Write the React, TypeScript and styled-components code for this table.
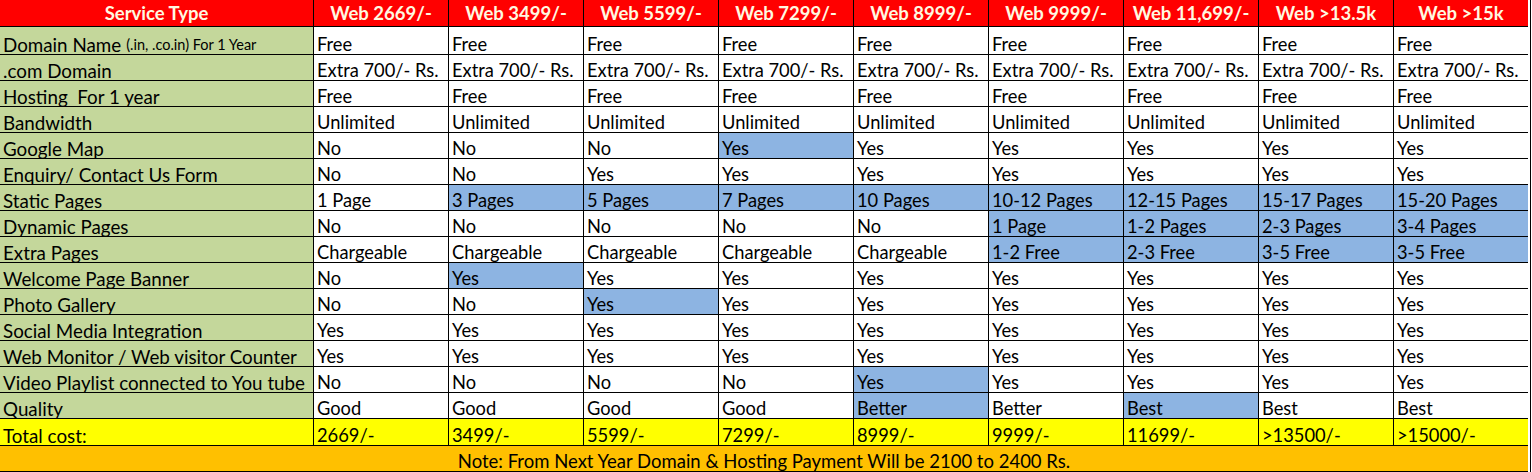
import React from "react";
import styled, { createGlobalStyle } from "styled-components";

const Global = createGlobalStyle`
  html, body { margin: 0; padding: 0; background: #fff; }
  body { font-family: Lato, "Open Sans", "Liberation Sans", sans-serif; }
`;

const Sheet = styled.div`
  display: grid;
  grid-template-columns: 313px repeat(9, 135px);
  grid-template-rows: 27px 28px repeat(14, 26px) 27px 26px;
  width: 1531px;
  border-right: 1px solid #000;
  box-sizing: border-box;
`;

const HeadCell = styled.div<{ $first?: boolean }>`
  background: #ff0000;
  color: #fff8e0;
  font-weight: 700;
  font-size: 18.5px;
  display: flex;
  align-items: center;
  justify-content: center;
  border-bottom: 1px solid #000;
  border-left: ${(p) => (p.$first ? "none" : "1px solid #000")};
  box-sizing: border-box;
  white-space: nowrap;
`;

type Tone = "green" | "white" | "blue" | "yellow";
const tones: Record<Tone, string> = {
  green: "#c4d79b",
  white: "#ffffff",
  blue: "#8db4e2",
  yellow: "#ffff00",
};

const Cell = styled.div<{ $tone: Tone; $first?: boolean }>`
  background: ${(p) => tones[p.$tone]};
  color: #000;
  font-size: ${(p) => (p.$first ? "18.8px" : "18.3px")};
  display: flex;
  align-items: flex-end;
  padding: 0 0 0 3px;
  border-bottom: 1px solid #000;
  border-left: ${(p) => (p.$first ? "none" : "1px solid #000")};
  box-sizing: border-box;
  white-space: pre;
  overflow: hidden;
  line-height: 19px;
`;

const Small = styled.span`
  font-size: 14.5px;
  margin-left: 5px;
`;

const Note = styled.div`
  grid-column: 1 / -1;
  background: #ffc000;
  color: #000;
  font-size: 18.5px;
  display: flex;
  align-items: flex-end;
  justify-content: center;
  border-bottom: 1px solid #000;
  box-sizing: border-box;
  line-height: 20px;
`;

const headers = [
  "Web 2669/-",
  "Web 3499/-",
  "Web 5599/-",
  "Web 7299/-",
  "Web 8999/-",
  "Web 9999/-",
  "Web 11,699/-",
  "Web >13.5k",
  "Web >15k",
];

const rep = (v: string) => Array(9).fill(v) as string[];

type Row = { label: React.ReactNode; values: string[]; blue?: number[] };

const rows: Row[] = [
  {
    label: (
      <>
        Domain Name<Small>(.in, .co.in) For 1 Year</Small>
      </>
    ),
    values: rep("Free"),
  },
  { label: ".com Domain", values: rep("Extra 700/- Rs.") },
  { label: "Hosting  For 1 year", values: rep("Free") },
  { label: "Bandwidth", values: rep("Unlimited") },
  {
    label: "Google Map",
    values: ["No", "No", "No", "Yes", "Yes", "Yes", "Yes", "Yes", "Yes"],
    blue: [3],
  },
  {
    label: "Enquiry/ Contact Us Form",
    values: ["No", "No", "Yes", "Yes", "Yes", "Yes", "Yes", "Yes", "Yes"],
  },
  {
    label: "Static Pages",
    values: [
      "1 Page",
      "3 Pages",
      "5 Pages",
      "7 Pages",
      "10 Pages",
      "10-12 Pages",
      "12-15 Pages",
      "15-17 Pages",
      "15-20 Pages",
    ],
    blue: [1, 2, 3, 4, 5, 6, 7, 8],
  },
  {
    label: "Dynamic Pages",
    values: ["No", "No", "No", "No", "No", "1 Page", "1-2 Pages", "2-3 Pages", "3-4 Pages"],
    blue: [5, 6, 7, 8],
  },
  {
    label: "Extra Pages",
    values: [
      "Chargeable",
      "Chargeable",
      "Chargeable",
      "Chargeable",
      "Chargeable",
      "1-2 Free",
      "2-3 Free",
      "3-5 Free",
      "3-5 Free",
    ],
    blue: [5, 6, 7, 8],
  },
  {
    label: "Welcome Page Banner",
    values: ["No", "Yes", "Yes", "Yes", "Yes", "Yes", "Yes", "Yes", "Yes"],
    blue: [1],
  },
  {
    label: "Photo Gallery",
    values: ["No", "No", "Yes", "Yes", "Yes", "Yes", "Yes", "Yes", "Yes"],
    blue: [2],
  },
  { label: "Social Media Integration", values: rep("Yes") },
  { label: "Web Monitor / Web visitor Counter", values: rep("Yes") },
  {
    label: "Video Playlist connected to You tube",
    values: ["No", "No", "No", "No", "Yes", "Yes", "Yes", "Yes", "Yes"],
    blue: [4],
  },
  {
    label: "Quality",
    values: ["Good", "Good", "Good", "Good", "Better", "Better", "Best", "Best", "Best"],
    blue: [4, 6],
  },
];

const totals = ["2669/-", "3499/-", "5599/-", "7299/-", "8999/-", "9999/-", "11699/-", ">13500/-", ">15000/-"];

export default function App() {
  return (
    <>
      <Global />
      <Sheet>
        <HeadCell $first>Service Type</HeadCell>
        {headers.map((h) => (
          <HeadCell key={h}>{h}</HeadCell>
        ))}
        {rows.map((r, i) => (
          <React.Fragment key={i}>
            <Cell $tone="green" $first>
              {r.label}
            </Cell>
            {r.values.map((v, j) => (
              <Cell key={j} $tone={r.blue?.includes(j) ? "blue" : "white"}>
                {v}
              </Cell>
            ))}
          </React.Fragment>
        ))}
        <Cell $tone="yellow" $first>
          Total cost:
        </Cell>
        {totals.map((t) => (
          <Cell key={t} $tone="yellow">
            {t}
          </Cell>
        ))}
        <Note>Note: From Next Year Domain &amp; Hosting Payment Will be 2100 to 2400 Rs.</Note>
      </Sheet>
    </>
  );
}
